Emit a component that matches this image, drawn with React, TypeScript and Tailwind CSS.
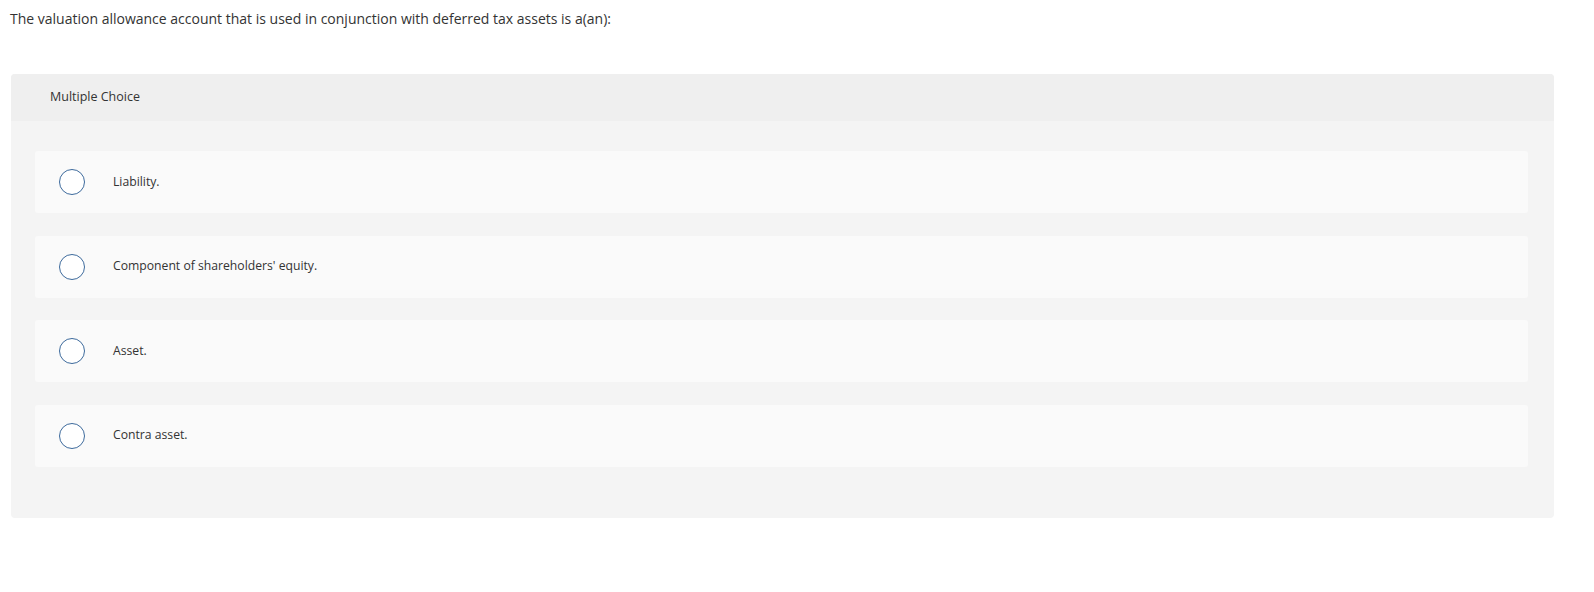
import React from "react";

const options = [
  "Liability.",
  "Component of shareholders' equity.",
  "Asset.",
  "Contra asset.",
];

export default function App() {
  return (
    <div
      className="w-[1594px] h-[592px] bg-white text-[#333333]"
      style={{ fontFamily: "'Open Sans', Arial, sans-serif" }}
    >
      <div className="pl-[10px] pt-[11px] text-[14px] leading-[16px]">
        The valuation allowance account that is used in conjunction with deferred tax assets is a(an):
      </div>
      <div className="ml-[11px] mt-[47px] w-[1543px] rounded-[4px] bg-[#f4f4f4] overflow-hidden">
        <div className="h-[47px] bg-[#efefef] flex items-center pl-[39px] text-[12.5px]">
          Multiple Choice
        </div>
        <div className="px-[24px] pt-[30px] pb-[51px] flex flex-col gap-[22.5px]">
          {options.map((o) => (
            <div
              key={o}
              className="h-[62px] bg-[#fafafa] rounded-[3px] flex items-center pl-[24px] mr-[2px]"
            >
              <div className="w-[26px] h-[26px] rounded-full border-[1.5px] border-[#3d6a9c] bg-white shrink-0" />
              <div className="ml-[28px] text-[12.2px]">{o}</div>
            </div>
          ))}
        </div>
      </div>
    </div>
  );
}
